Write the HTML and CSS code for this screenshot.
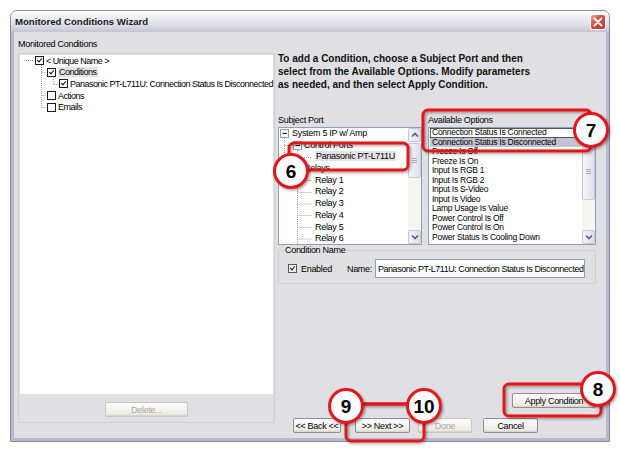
FILE: index.html
```html
<!DOCTYPE html>
<html lang="en">
<head>
  <meta charset="UTF-8" />
  <title>Monitored Conditions Wizard</title>
  <link rel="stylesheet" href="styles.css">
</head>
<body>

  <div class="window">
    <div class="titlebar">
      <span class="title">Monitored Conditions Wizard</span>
      <span class="close">
        <svg width="10" height="10" viewBox="0 0 10 10"><path d="M1.5 1.5 L8.5 8.5 M8.5 1.5 L1.5 8.5" stroke="#fff" stroke-width="2" stroke-linecap="round"/></svg>
      </span>
    </div>

    <div class="client">
      <div class="left">
        <div class="caption">Monitored Conditions</div>
        <div class="group">
          <div class="tree">
            <svg class="tree-lines" width="252" height="70">
              <g stroke="#a0a0a0" stroke-dasharray="1 1" fill="none">
                <path d="M4 5.5 H14"/>
                <path d="M21.5 10 V52.5"/>
                <path d="M21.5 17.5 H26 M21.5 40.5 H26 M21.5 52.5 H26"/>
                <path d="M33.5 22 V29.5 H38"/>
              </g>
            </svg>
            <div class="trow" style="padding-left: 15px"><span class="ck on"></span>&lt; Unique Name &gt;</div>
            <div class="trow" style="padding-left: 27px"><span class="ck on"></span><span class="sel">Conditions</span></div>
            <div class="trow" style="padding-left: 39px"><span class="ck on"></span>Panasonic PT-L711U: Connection Status Is Disconnected</div>
            <div class="trow" style="padding-left: 27px"><span class="ck"></span>Actions</div>
            <div class="trow" style="padding-left: 27px"><span class="ck"></span>Emails</div>
          </div>
          <div class="btn delete disabled">Delete...</div>
        </div>
      </div>

      <div class="right">
        <p class="intro">To add a Condition, choose a Subject Port and then<br>select from the Available Options. Modify parameters<br>as needed, and then select Apply Condition.</p>

        <div class="lists">
          <div class="col subject">
            <div class="caption">Subject Port</div>
            <div class="listbox">
              <div class="items ports">
                <svg class="tree-lines" width="131" height="116">
                  <g stroke="#a0a0a0" stroke-dasharray="1 1" fill="none">
                    <path d="M5.5 10 V41"/>
                    <path d="M5.5 17.5 H14"/>
                    <path d="M18.5 22 V29.5 H33"/>
                    <path d="M18.5 45 V116"/>
                    <path d="M18.5 52.5 H33 M18.5 64.5 H33 M18.5 76 H33 M18.5 87.5 H33 M18.5 99.5 H33 M18.5 111 H33"/>
                  </g>
                  <g fill="#fff" stroke="#8c9cb4">
                    <rect x="1.5" y="1.5" width="8" height="8"/>
                    <rect x="14.5" y="13.5" width="8" height="8"/>
                    <rect x="14.5" y="37" width="8" height="8"/>
                  </g>
                  <g stroke="#000">
                    <path d="M3.5 5.5 H8 M16.5 17.5 H21 M16.5 41 H21"/>
                  </g>
                </svg>
                <div class="prow" style="padding-left: 13px">System 5 IP w/ Amp</div>
                <div class="prow" style="padding-left: 25px">Control Ports</div>
                <div class="prow" style="padding-left: 36px"><span class="sel">Panasonic PT-L711U</span></div>
                <div class="prow" style="padding-left: 25px">Relays</div>
                <div class="prow" style="padding-left: 36px">Relay 1</div>
                <div class="prow" style="padding-left: 36px">Relay 2</div>
                <div class="prow" style="padding-left: 36px">Relay 3</div>
                <div class="prow" style="padding-left: 36px">Relay 4</div>
                <div class="prow" style="padding-left: 36px">Relay 5</div>
                <div class="prow" style="padding-left: 36px">Relay 6</div>
              </div>
              <div class="scrollbar">
                <div class="sb-btn"><svg width="8" height="6" viewBox="0 0 8 6"><path d="M1 4.5 L4 1.5 L7 4.5" stroke="#4d6185" stroke-width="1.6" fill="none"/></svg></div>
                <div class="sb-track"><div class="sb-thumb" style="margin-top: 1px; height: 35px"><i></i><i></i><i></i></div></div>
                <div class="sb-btn"><svg width="8" height="6" viewBox="0 0 8 6"><path d="M1 1.5 L4 4.5 L7 1.5" stroke="#4d6185" stroke-width="1.6" fill="none"/></svg></div>
              </div>
            </div>
          </div>

          <div class="col options">
            <div class="caption">Available Options</div>
            <div class="listbox">
              <div class="items opts">
                <div class="orow focus">Connection Status Is Connected</div>
                <div class="orow picked">Connection Status Is Disconnected</div>
                <div class="orow">Freeze Is Off</div>
                <div class="orow">Freeze Is On</div>
                <div class="orow">Input Is RGB 1</div>
                <div class="orow">Input Is RGB 2</div>
                <div class="orow">Input Is S-Video</div>
                <div class="orow">Input Is Video</div>
                <div class="orow">Lamp Usage Is Value</div>
                <div class="orow">Power Control Is Off</div>
                <div class="orow">Power Control Is On</div>
                <div class="orow">Power Status Is Cooling Down</div>
              </div>
              <div class="scrollbar">
                <div class="sb-btn"><svg width="8" height="6" viewBox="0 0 8 6"><path d="M1 4.5 L4 1.5 L7 4.5" stroke="#4d6185" stroke-width="1.6" fill="none"/></svg></div>
                <div class="sb-track"><div class="sb-thumb" style="margin-top: 1px; height: 57px"><i></i><i></i><i></i></div></div>
                <div class="sb-btn"><svg width="8" height="6" viewBox="0 0 8 6"><path d="M1 1.5 L4 4.5 L7 1.5" stroke="#4d6185" stroke-width="1.6" fill="none"/></svg></div>
              </div>
            </div>
          </div>
        </div>

        <fieldset class="cond">
          <legend>Condition Name</legend>
          <div class="cond-row">
            <span class="ck flat on"></span>
            <span class="enabled">Enabled</span>
            <span class="name-label">Name:</span>
            <div class="textbox">Panasonic PT-L711U: Connection Status Is Disconnected</div>
          </div>
        </fieldset>

        <div class="apply-row">
          <div class="btn apply">Apply Condition</div>
        </div>

        <div class="nav-row">
          <div class="btn back">&lt;&lt; Back &lt;&lt;</div>
          <div class="btn next">&gt;&gt; Next &gt;&gt;</div>
          <div class="btn done disabled">Done</div>
          <div class="btn cancel">Cancel</div>
        </div>
      </div>
    </div>
  </div>

  <svg class="callouts" width="620" height="453">
    <defs>
      <filter id="shadow" x="-20%" y="-20%" width="140%" height="140%">
        <feDropShadow dx="1.5" dy="1.5" stdDeviation="1" flood-color="#000" flood-opacity="0.35"/>
      </filter>
    </defs>
    <g filter="url(#shadow)" fill="none" stroke="#e3151b" stroke-width="3">
      <rect x="289" y="143" width="119" height="27" rx="5"/>
      <rect x="423" y="110" width="168" height="41" rx="5"/>
      <rect x="504" y="384" width="97" height="32" rx="5"/>
      <rect x="346" y="404" width="78" height="37" rx="5"/>
      <path d="M346 404 H424"/>
    </g>
    <g filter="url(#shadow)" fill="#fff" stroke="#e3151b" stroke-width="3">
      <circle cx="291" cy="171" r="16.5"/>
      <circle cx="591" cy="130" r="16.5"/>
      <circle cx="598" cy="389" r="16.5"/>
      <circle cx="346" cy="406" r="16.5"/>
      <circle cx="424" cy="406" r="16.5"/>
    </g>
    <g class="num">
      <text x="291" y="178">6</text>
      <text x="591" y="137">7</text>
      <text x="598" y="396">8</text>
      <text x="346" y="413">9</text>
      <text x="424" y="413">10</text>
    </g>
  </svg>

</body>
</html>
```

FILE: styles.css
```css
body {
  margin: 0;
  background: #fff;
  font-family: "Liberation Sans", Arial, sans-serif;
  font-size: 9px;
  letter-spacing: -0.3px;
  color: #000;
  position: relative;
  width: 620px;
  height: 453px;
  overflow: hidden;
}

.window {
  margin: 10px 0 0 10px;
  width: 600px;
  height: 432px;
  box-sizing: border-box;
  border: 1px solid #8a8aa2;
  border-radius: 7px 7px 0 0;
  display: flex;
  flex-direction: column;
  overflow: hidden;
  background: #e0dfe3;
}

.titlebar {
  height: 21px;
  flex: none;
  display: flex;
  align-items: center;
  justify-content: space-between;
  padding: 0 3px 0 4px;
  background: linear-gradient(#ffffff 0%, #eeeef4 30%, #dcdce6 70%, #c4c4d2 100%);
}

.title {
  font-size: 9.6px;
  font-weight: bold;
  letter-spacing: 0;
  color: #1a1a1a;
}

.close {
  width: 16px;
  height: 16px;
  box-sizing: border-box;
  border: 1px solid #fff;
  border-radius: 3px;
  background: linear-gradient(135deg, #f0a090 0%, #d94a3c 45%, #c0302a 100%);
  display: flex;
  align-items: center;
  justify-content: center;
}

.client {
  flex: 1;
  display: flex;
  gap: 3px;
  padding: 6px 4px 5px 4px;
  border: 3px solid #b9b9cc;
  border-top: none;
}

.caption {
  height: 12px;
  line-height: 12px;
}

.left {
  width: 257px;
}

.group {
  margin-top: 3px;
  height: 370px;
  box-sizing: border-box;
  border: 1px solid #cfcfc8;
  border-radius: 2px;
  padding: 1px;
  display: flex;
  flex-direction: column;
  align-items: center;
}

.tree {
  position: relative;
  align-self: stretch;
  height: 339px;
  background: #fff;
}

.tree-lines {
  position: absolute;
  left: 0;
  top: 0;
}

.trow {
  position: relative;
  height: 11.6px;
  display: flex;
  align-items: center;
  white-space: nowrap;
  letter-spacing: -0.5px;
}

.ck {
  width: 9px;
  height: 9px;
  box-sizing: border-box;
  border: 1px solid #1a1a1a;
  background: #fff;
  margin-right: 2px;
  flex: none;
  position: relative;
}

.ck.on::after {
  content: "";
  position: absolute;
  left: 2px;
  top: 0;
  width: 2px;
  height: 4px;
  border: solid #111;
  border-width: 0 1.5px 1.5px 0;
  transform: rotate(40deg);
}

.sel {
  background: #e4e4e4;
  padding: 0 1px;
}

.btn {
  height: 15px;
  box-sizing: border-box;
  border: 1px solid #8e8f9a;
  border-radius: 2px;
  background: linear-gradient(#fefefe, #ecebe6 85%, #d6d0c5);
  display: flex;
  align-items: center;
  justify-content: center;
  white-space: nowrap;
}

.btn.disabled {
  color: #aca899;
  border-color: #c9c7ba;
}

.delete {
  width: 83px;
  margin-top: 8px;
}

.right {
  width: 318px;
  display: flex;
  flex-direction: column;
}

.intro {
  margin: 14px 0 0 0;
  font-size: 10px;
  font-weight: bold;
  letter-spacing: 0;
  line-height: 13px;
  color: #111;
}

.lists {
  margin-top: 23px;
  display: flex;
  justify-content: space-between;
}

.subject {
  width: 144px;
}

.options {
  width: 168px;
}

.listbox {
  margin-top: 1px;
  height: 118px;
  box-sizing: border-box;
  border: 1px solid #8f9fb5;
  background: #fff;
  display: flex;
}

.items {
  flex: 1;
  position: relative;
  overflow: hidden;
  white-space: nowrap;
}

.prow {
  position: relative;
  height: 11.7px;
  line-height: 11.7px;
}

.orow {
  height: 9.5px;
  line-height: 9.5px;
  padding-left: 2px;
  margin: 0 1px;
  font-size: 8.5px;
  letter-spacing: -0.25px;
}

.orow.focus {
  outline: 1px solid #555;
  outline-offset: -1px;
}

.orow.picked {
  background: #c3c3cf;
}

.scrollbar {
  width: 13px;
  display: flex;
  flex-direction: column;
  background: #f4f4f0;
}

.sb-btn {
  height: 14px;
  box-sizing: border-box;
  border: 1px solid #c4c8d8;
  border-radius: 2px;
  background: linear-gradient(90deg, #f6f6f8, #dcdee8);
  display: flex;
  align-items: center;
  justify-content: center;
}

.sb-track {
  flex: 1;
}

.sb-thumb {
  box-sizing: border-box;
  border: 1px solid #c4c8d8;
  border-radius: 2px;
  background: linear-gradient(90deg, #f6f6f8, #dfe0ea);
  display: flex;
  flex-direction: column;
  align-items: center;
  justify-content: center;
  gap: 1px;
}

.sb-thumb i {
  width: 5px;
  height: 1px;
  background: #a8acc0;
}

.cond {
  margin: 0;
  padding: 4px 10px 5px 9px;
  border: 1px solid #cfcfc8;
  border-radius: 2px;
}

.cond legend {
  padding: 0 1px;
  margin-left: -4px;
  line-height: 10px;
}

.cond-row {
  display: flex;
  align-items: center;
}

.ck.flat {
  border-color: #555;
  background: #f4f4f4;
}

.enabled {
  margin-left: 2px;
}

.name-label {
  margin-left: 15px;
  margin-right: 3px;
}

.textbox {
  flex: 1;
  height: 19px;
  box-sizing: border-box;
  border: 1px solid #8f9fb5;
  background: #fff;
  padding-left: 2px;
  display: flex;
  align-items: center;
  white-space: nowrap;
  overflow: hidden;
  letter-spacing: -0.45px;
}

.apply-row {
  margin-top: auto;
  display: flex;
  justify-content: flex-end;
}

.apply {
  width: 84px;
}

.nav-row {
  margin-top: 10px;
  display: flex;
  padding-left: 15px;
}

.back {
  width: 48px;
}

.next {
  width: 55px;
  margin-left: 14px;
}

.done {
  width: 54px;
  margin-left: 8px;
}

.cancel {
  width: 55px;
  margin-left: 11px;
}

.callouts {
  position: absolute;
  left: 0;
  top: 0;
  pointer-events: none;
}

.num text {
  font-family: "Liberation Sans", Arial, sans-serif;
  font-size: 19px;
  font-weight: bold;
  letter-spacing: 0;
  text-anchor: middle;
  fill: #000;
}
```
